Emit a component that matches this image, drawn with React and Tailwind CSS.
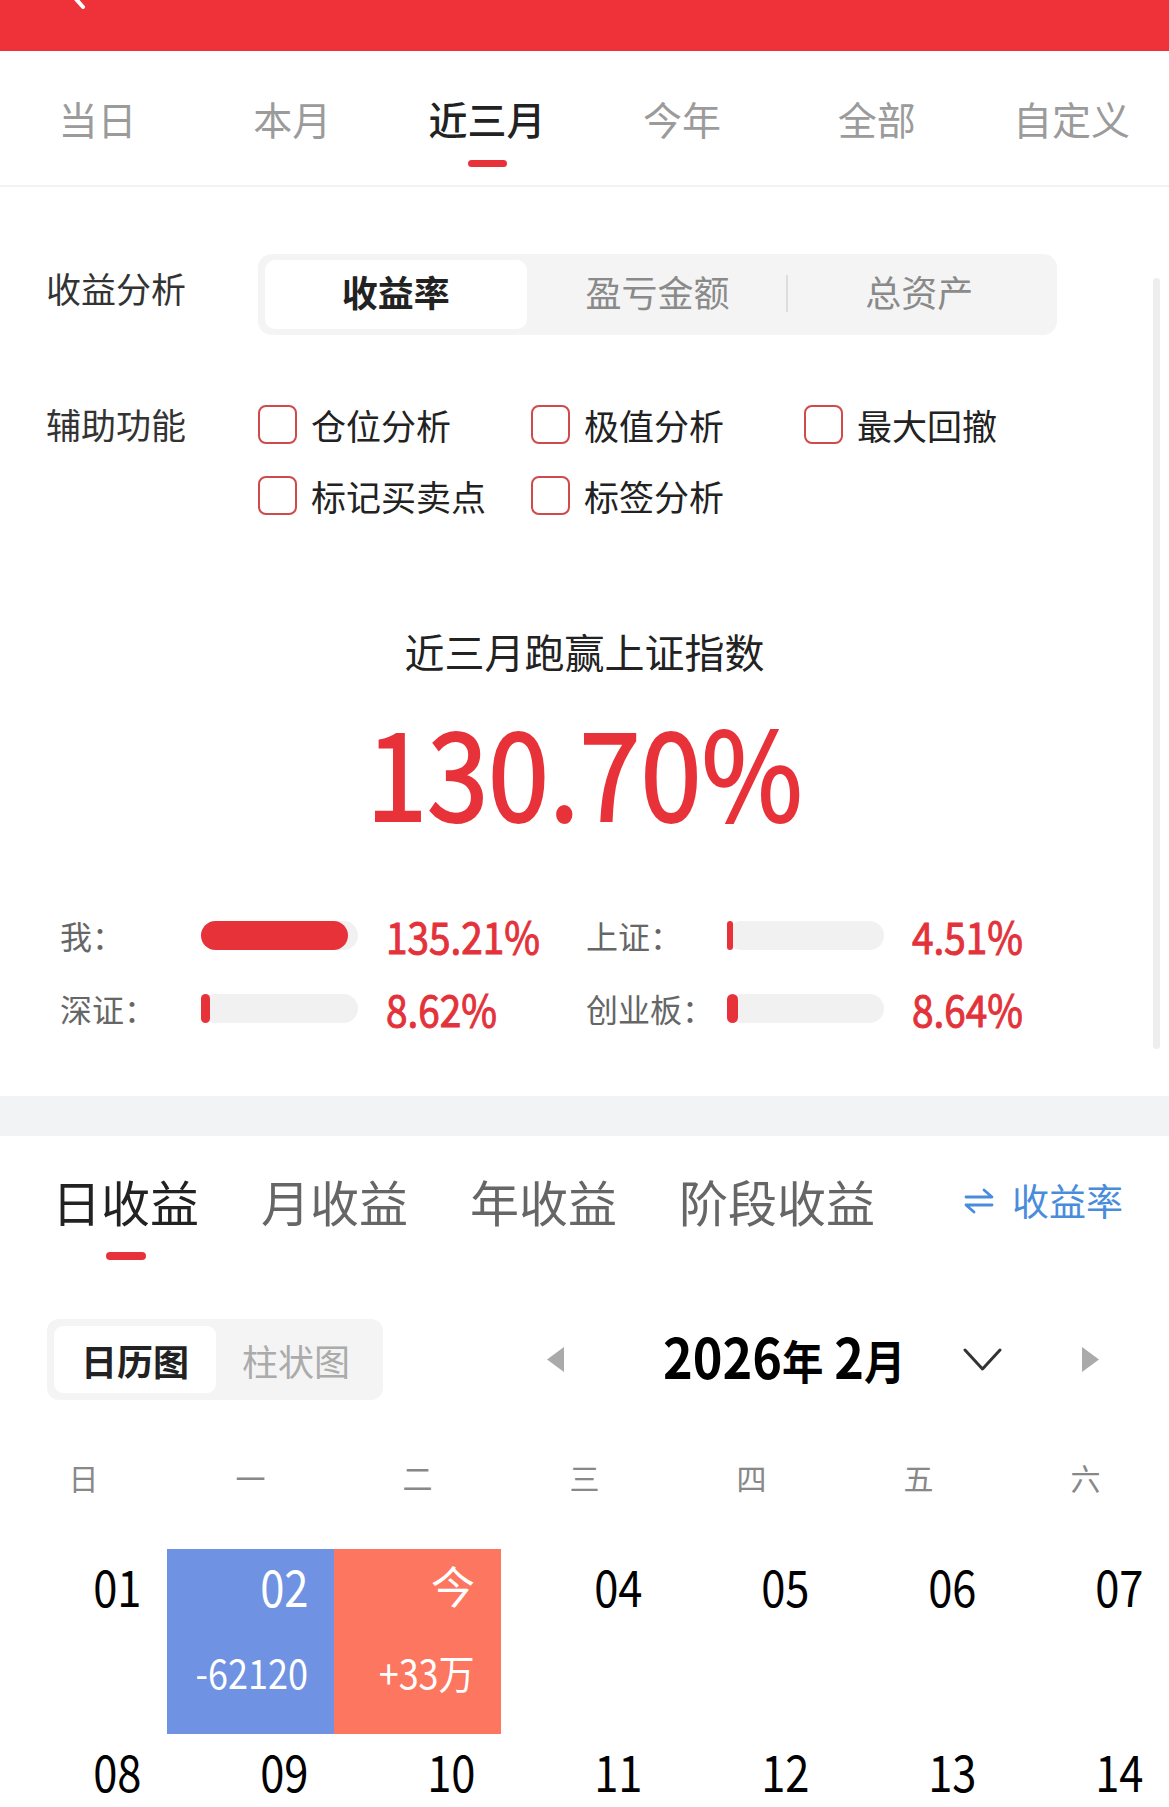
import { useState } from 'react';

const CJK = "font-['Noto_Sans_CJK_SC',sans-serif]";

const periodTabs = ['当日', '本月', '近三月', '今年', '全部', '自定义'];
const helpers = ['仓位分析', '极值分析', '最大回撤', '标记买卖点', '标签分析'];
const compare = [
  { label: '我：', fill: 147, value: '135.21%' },
  { label: '上证：', fill: 6, value: '4.51%' },
  { label: '深证：', fill: 9, value: '8.62%' },
  { label: '创业板：', fill: 11, value: '8.64%' },
];
const weekDays = ['日', '一', '二', '三', '四', '五', '六'];

// 日历数据：2026年2月
const days = Array.from({ length: 14 }, (_, i) => {
  const d = String(i + 1).padStart(2, '0');
  if (i === 1) return { day: d, value: '-62120', bg: 'bg-[#6f92e2]' };
  if (i === 2) return { day: '今', value: '+33万', bg: 'bg-[#fd7660]' };
  return { day: d };
});

function Checkbox({ label }) {
  return (
    <div className="w-[273px] h-[39px] flex items-center gap-[14px]">
      <span className="w-[39px] h-[39px] rounded-[8px] border-2 border-[#cf4a4a]" />
      <span className="text-[35px] leading-[39px] text-[#222]">{label}</span>
    </div>
  );
}

function CompareItem({ item }) {
  return (
    <div className="flex items-center">
      <span className="w-[141px] text-[32px] leading-[44px] text-[#666]">{item.label}</span>
      <div className="w-[157px] h-[29px] rounded-full bg-[#f1f1f1]">
        <div className="h-full rounded-full bg-[#e8323a]" style={{ width: item.fill }} />
      </div>
      <span className="ml-[28px] inline-block origin-left scale-x-[0.9] text-[43px] leading-[44px] text-[#e3323a] whitespace-nowrap [-webkit-text-stroke:1px_#e3323a]">
        {item.value}
      </span>
    </div>
  );
}

export default function App() {
  const [period, setPeriod] = useState(2);
  const [tab, setTab] = useState(0);

  return (
    <div className={`relative w-[1169px] h-[1807px] overflow-hidden bg-white ${CJK}`}>
      {/* 顶部红色导航 */}
      <div className="relative h-[51px] bg-[#ef323a]">
        <svg className="absolute left-[60px] top-0" width="34" height="20" viewBox="0 0 34 20">
          <path d="M8 -10 L23 7" stroke="#fff" strokeWidth="4" strokeLinecap="round" fill="none" />
        </svg>
      </div>

      {/* 时间段 tabs */}
      <div className="flex h-[136px] border-b-2 border-[#f2f2f2]">
        {periodTabs.map((t, i) => (
          <div key={t} onClick={() => setPeriod(i)} className="flex-1 flex flex-col items-center pt-[47px] cursor-pointer">
            <span className={`text-[39px] leading-[40px] ${i === period ? 'text-[#222] font-medium' : 'text-[#9b9b9b]'}`}>{t}</span>
            {i === period && <span className="mt-[22px] w-[39px] h-[7px] rounded-full bg-[#e8323a]" />}
          </div>
        ))}
      </div>

      {/* 收益分析 */}
      <div className="relative pt-[67px] pb-[66px]">
        <div className="absolute right-[9px] top-[91px] w-[7px] h-[771px] rounded-full bg-[#eeeeee]" />

        <div className="flex px-[46px]">
          <div className="w-[212px] pt-[16px] text-[35px] leading-[35px] text-[#333]">收益分析</div>
          <div className="flex w-[799px] h-[81px] px-[7px] py-[6px] rounded-[14px] bg-[#f4f4f4]">
            <div className="flex-1 flex items-center justify-center pb-[8px] rounded-[10px] bg-white text-[36px] font-bold text-[#222]">收益率</div>
            <div className="relative flex-1 flex items-center justify-center pb-[8px] text-[36px] text-[#8a8a8a]">
              盈亏金额
              <span className="absolute right-0 top-[15px] w-[2px] h-[37px] bg-[#dddddd]" />
            </div>
            <div className="flex-1 flex items-center justify-center pb-[8px] text-[36px] text-[#8a8a8a]">总资产</div>
          </div>
        </div>

        <div className="flex px-[46px] mt-[70px]">
          <div className="w-[212px] h-[39px] flex items-center text-[35px] text-[#333]">辅助功能</div>
          <div className="flex flex-wrap w-[819px] gap-y-[32px]">
            {helpers.map((h) => (
              <Checkbox key={h} label={h} />
            ))}
          </div>
        </div>

        <div className="mt-[107px] text-center text-[40px] leading-[58px] text-[#222]">近三月跑赢上证指数</div>
        <div className="mt-[0px] h-[177px] text-center text-[122px] leading-[1.45] text-[#e8323a]">
          <span className="inline-block scale-x-[0.9] whitespace-nowrap [-webkit-text-stroke:2px_#e8323a]">130.70%</span>
        </div>

        <div className="mt-[56px] px-[60px] grid grid-cols-[526px_1fr] gap-y-[29px]">
          {compare.map((c) => (
            <CompareItem key={c.label} item={c} />
          ))}
        </div>
      </div>

      <div className="h-[40px] bg-[#f2f3f5]" />

      {/* 收益 tabs */}
      <div className="flex items-start pt-[41px] pl-[52px] pr-[46px]">
        {['日收益', '月收益', '年收益', '阶段收益'].map((t, i) => (
          <div key={t} onClick={() => setTab(i)} className={`flex flex-col items-center cursor-pointer ${i > 0 ? 'ml-[62px]' : ''}`}>
            <span className={`text-[49px] leading-[48px] ${i === tab ? 'text-[#222]' : 'text-[#666]'}`}>{t}</span>
            {i === tab && <span className="mt-[27px] w-[40px] h-[8px] rounded-full bg-[#e8323a]" />}
          </div>
        ))}
        <div className="ml-auto flex items-center gap-[18px] h-[48px] text-[37px] text-[#4a8cdc]">
          <svg width="30" height="26" viewBox="0 0 30 26" fill="none" stroke="#4a8cdc" strokeWidth="2.8" strokeLinecap="round" strokeLinejoin="round">
            <path d="M2 9 H28 L20 2" />
            <path d="M28 17 H2 L10 24" />
          </svg>
          收益率
        </div>
      </div>

      {/* 日历图 / 月份切换 */}
      <div className="flex items-center mt-[59px] px-[47px] h-[81px]">
        <div className="flex w-[336px] h-[81px] p-[7px] rounded-[12px] bg-[#f4f4f4]">
          <div className="w-[162px] flex items-center justify-center rounded-[9px] bg-white text-[36px] font-bold text-[#222]">日历图</div>
          <div className="flex-1 flex items-center justify-center text-[36px] text-[#ababab]">柱状图</div>
        </div>
        <svg className="ml-[162px]" width="20" height="27" viewBox="0 0 20 27">
          <path d="M19 1 L2 13.5 L19 26 Z" fill="#aaaaaa" />
        </svg>
        <div className="ml-[98px] w-[241px] whitespace-nowrap">
          <span className="inline-block origin-left scale-x-[0.9] font-bold text-black">
            <span className="text-[56px] leading-[56px]">2026</span>
            <span className="text-[46px]">年</span>
            <span className="ml-[12px] text-[56px] leading-[56px]">2</span>
            <span className="text-[46px]">月</span>
          </span>
        </div>
        <svg className="ml-[59px]" width="39" height="24" viewBox="0 0 39 24" fill="none" stroke="#333" strokeWidth="3" strokeLinecap="round" strokeLinejoin="round">
          <path d="M2 2 L19.5 21 L37 2" />
        </svg>
        <svg className="ml-[79px]" width="20" height="27" viewBox="0 0 20 27">
          <path d="M1 1 L18 13.5 L1 26 Z" fill="#aaaaaa" />
        </svg>
      </div>

      {/* 星期 */}
      <div className="grid grid-cols-7 mt-[62px] text-center text-[30px] leading-[30px] text-[#888]">
        {weekDays.map((w) => (
          <span key={w}>{w}</span>
        ))}
      </div>

      {/* 日历 */}
      <div className="grid grid-cols-7 mt-[57px]">
        {days.map((d) => (
          <div key={d.day} className={`h-[185px] pr-[26px] pt-[11px] text-right ${d.bg || ''}`}>
            <div className={`h-[50px] leading-[50px] ${d.bg ? 'text-white' : 'text-black'}`}>
              {d.day === '今' ? (
                <span className="text-[44px]">今</span>
              ) : (
                <span className="inline-block origin-right scale-x-[0.87] text-[50px]">{d.day}</span>
              )}
            </div>
            {d.value && (
              <div className="mt-[42px] h-[40px] leading-[40px] text-white">
                <span className="inline-block origin-right scale-x-[0.9] text-[40px] whitespace-nowrap">{d.value}</span>
              </div>
            )}
          </div>
        ))}
      </div>
    </div>
  );
}
